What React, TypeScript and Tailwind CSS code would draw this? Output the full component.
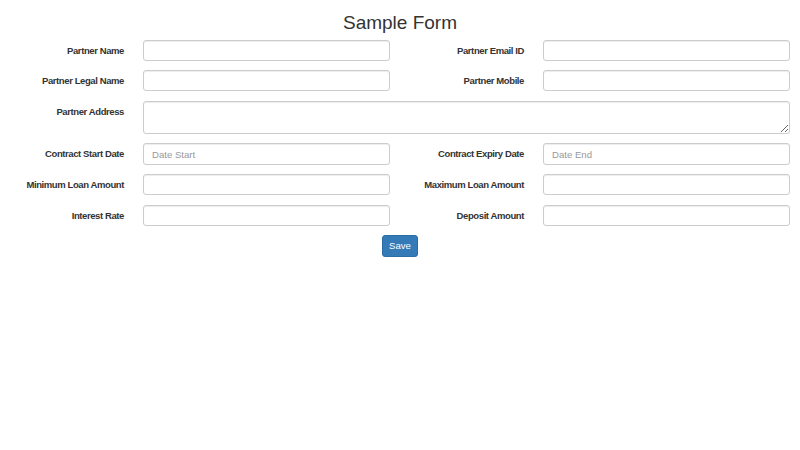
const font = { fontFamily: '"Liberation Sans", Arial, sans-serif' }

type Field = { label: string; placeholder?: string }

const rows: [Field, Field][] = [
  [{ label: 'Partner Name' }, { label: 'Partner Email ID' }],
  [{ label: 'Partner Legal Name' }, { label: 'Partner Mobile' }],
]

const rows2: [Field, Field][] = [
  [{ label: 'Contract Start Date', placeholder: 'Date Start' }, { label: 'Contract Expiry Date', placeholder: 'Date End' }],
  [{ label: 'Minimum Loan Amount' }, { label: 'Maximum Loan Amount' }],
  [{ label: 'Interest Rate' }, { label: 'Deposit Amount' }],
]

const inputCls =
  'h-[21.4px] w-[247px] rounded-[3px] border border-[#cccccc] bg-white px-[8px] text-[9.6px] text-[#555] placeholder:text-[#999] shadow-[inset_0_1px_1px_rgba(0,0,0,0.075)] outline-none'

function Label({ text }: { text: string }) {
  return (
    <label className="h-[21.4px] w-[143px] shrink-0 pt-[1px] pr-[19px] text-right text-[9.5px] font-bold tracking-[-0.4px] leading-[20.4px] text-[#333]">
      {text}
    </label>
  )
}

function Pair({ a, b }: { a: Field; b: Field }) {
  return (
    <div className="flex items-start">
      <Label text={a.label} />
      <input className={inputCls} placeholder={a.placeholder} />
      <div className="w-[10px] shrink-0" />
      <Label text={b.label} />
      <input className={inputCls} placeholder={b.placeholder} />
    </div>
  )
}

export default function App() {
  return (
    <div className="min-h-[450px] w-[800px] bg-white text-[#333]" style={font}>
      <h3 className="h-[39.5px] pt-[13px] text-center text-[19px] font-normal leading-[19px]">Sample Form</h3>
      <form className="flex flex-col gap-[9.2px]" onSubmit={(e) => e.preventDefault()}>
        {rows.map(([a, b]) => (
          <Pair key={a.label} a={a} b={b} />
        ))}
        <div className="flex items-start">
          <Label text="Partner Address" />
          <textarea className="block h-[33.6px] w-[647px] rounded-[3px] border border-[#cccccc] bg-white px-[8px] py-[4px] text-[9.6px] shadow-[inset_0_1px_1px_rgba(0,0,0,0.075)] outline-none" />
        </div>
        {rows2.map(([a, b]) => (
          <Pair key={a.label} a={a} b={b} />
        ))}
        <div className="flex justify-center">
          <button
            type="submit"
            className="h-[21.4px] w-[36px] rounded-[3px] border border-[#2e6da4] bg-[#337ab7] text-[9.6px] text-white"
          >
            Save
          </button>
        </div>
      </form>
    </div>
  )
}
